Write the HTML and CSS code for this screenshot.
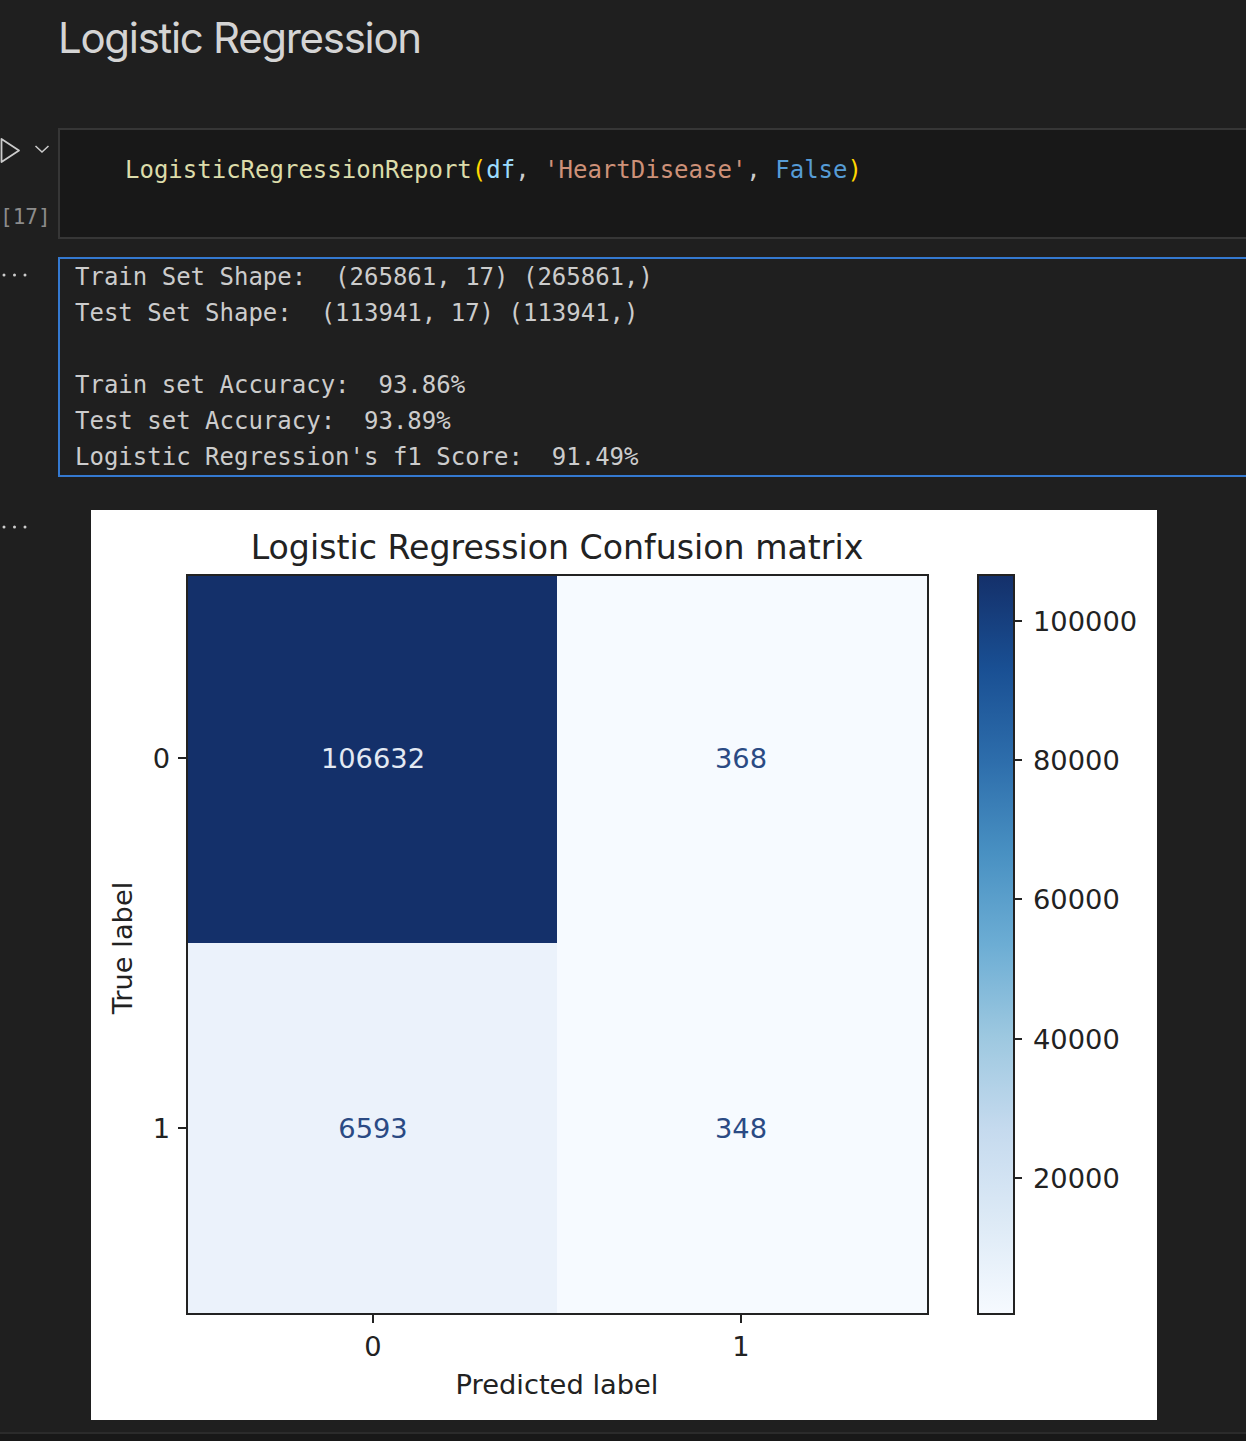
FILE: index.html
```html
<!DOCTYPE html>
<html lang="en">
<head>
<meta charset="utf-8">
<title>Logistic Regression</title>
<link rel="stylesheet" href="styles.css">
</head>
<body>
<div class="page">
  <h1 class="md-title">Logistic Regression</h1>

  <div class="cell code-cell">
    <div class="gutter code-gutter">
      <div class="run-controls">
        <svg class="run-icon" width="22" height="28" viewBox="0 0 22 28"><path d="M1.5 2 L19 13.5 L1.5 25 Z" fill="none" stroke="#cccccc" stroke-width="1.8" stroke-linejoin="round"/></svg>
        <svg class="chevron" width="16" height="10" viewBox="0 0 16 10"><path d="M1.5 2 L8 8 L14.5 2" fill="none" stroke="#cccccc" stroke-width="1.5"/></svg>
      </div>
      <div class="exec-count">[17]</div>
    </div>
    <div class="editor"><pre class="code"><span class="fn">LogisticRegressionReport</span><span class="br">(</span><span class="var">df</span><span class="pn">, </span><span class="str">'HeartDisease'</span><span class="pn">, </span><span class="kw">False</span><span class="br">)</span></pre></div>
  </div>

  <div class="cell output-cell">
    <div class="gutter out-gutter">
      <svg class="dots" width="30" height="6" viewBox="0 0 30 6"><circle cx="4" cy="3" r="1.5" fill="#cccccc"/><circle cx="14.5" cy="3" r="1.5" fill="#cccccc"/><circle cx="25" cy="3" r="1.5" fill="#cccccc"/></svg>
    </div>
    <pre class="output">Train Set Shape:  (265861, 17) (265861,)
Test Set Shape:  (113941, 17) (113941,)

Train set Accuracy:  93.86%
Test set Accuracy:  93.89%
Logistic Regression's f1 Score:  91.49%</pre>
  </div>

  <div class="cell plot-cell">
    <div class="gutter out-gutter plot-gutter">
      <svg class="dots" width="30" height="6" viewBox="0 0 30 6"><circle cx="4" cy="3" r="1.5" fill="#cccccc"/><circle cx="14.5" cy="3" r="1.5" fill="#cccccc"/><circle cx="25" cy="3" r="1.5" fill="#cccccc"/></svg>
    </div>
    <div class="figure">
      <svg class="plot" width="1066" height="910" viewBox="0 0 1066 910">
        <defs>
          <linearGradient id="blues" x1="0" y1="0" x2="0" y2="1">
            <stop offset="0" stop-color="#14306a"/>
            <stop offset="0.125" stop-color="#194f93"/>
            <stop offset="0.25" stop-color="#2d6dab"/>
            <stop offset="0.375" stop-color="#4890c2"/>
            <stop offset="0.5" stop-color="#6cadd4"/>
            <stop offset="0.625" stop-color="#9dc8e0"/>
            <stop offset="0.75" stop-color="#c5daee"/>
            <stop offset="0.875" stop-color="#ddeaf6"/>
            <stop offset="1" stop-color="#f6faff"/>
          </linearGradient>
        </defs>
        <text class="title" x="466" y="49" text-anchor="middle">Logistic Regression Confusion matrix</text>

        <rect x="96" y="65" width="370" height="368" fill="#14306a"/>
        <rect x="466" y="65" width="371" height="368" fill="#f6faff"/>
        <rect x="96" y="433" width="370" height="371" fill="#ebf2fb"/>
        <rect x="466" y="433" width="371" height="371" fill="#f6faff"/>
        <rect x="96" y="65" width="741" height="739" fill="none" stroke="#222" stroke-width="2"/>

        <text class="val light" x="282" y="258" text-anchor="middle">106632</text>
        <text class="val" x="650" y="258" text-anchor="middle">368</text>
        <text class="val" x="282" y="628" text-anchor="middle">6593</text>
        <text class="val" x="650" y="628" text-anchor="middle">348</text>

        <g stroke="#222" stroke-width="2">
          <line x1="87" y1="248" x2="96" y2="248"/>
          <line x1="87" y1="618" x2="96" y2="618"/>
          <line x1="282" y1="804" x2="282" y2="813"/>
          <line x1="650" y1="804" x2="650" y2="813"/>
        </g>
        <text class="tick" x="79" y="258" text-anchor="end">0</text>
        <text class="tick" x="79" y="628" text-anchor="end">1</text>
        <text class="tick" x="282" y="846" text-anchor="middle">0</text>
        <text class="tick" x="650" y="846" text-anchor="middle">1</text>

        <text class="tick" x="466" y="884" text-anchor="middle">Predicted label</text>
        <text class="tick" transform="translate(41 438) rotate(-90)" text-anchor="middle">True label</text>

        <rect x="887" y="65" width="36" height="739" fill="url(#blues)" stroke="#222" stroke-width="2"/>
        <g stroke="#222" stroke-width="2">
          <line x1="923" y1="111" x2="931" y2="111"/>
          <line x1="923" y1="250" x2="931" y2="250"/>
          <line x1="923" y1="389" x2="931" y2="389"/>
          <line x1="923" y1="529" x2="931" y2="529"/>
          <line x1="923" y1="668" x2="931" y2="668"/>
        </g>
        <text class="tick" x="942" y="121">100000</text>
        <text class="tick" x="942" y="260">80000</text>
        <text class="tick" x="942" y="399">60000</text>
        <text class="tick" x="942" y="539">40000</text>
        <text class="tick" x="942" y="678">20000</text>
      </svg>
    </div>
  </div>

  <div class="footer"></div>
</div>
</body>
</html>
```

FILE: styles.css
```css
html, body {
  margin: 0;
  padding: 0;
  background: #1f1f1f;
  overflow: hidden;
}

.page {
  width: 1246px;
  height: 1441px;
  overflow: hidden;
}

.md-title {
  margin: 0;
  padding: 12px 0 0 58px;
  height: 52px;
  font-family: Inter, "Open Sans", sans-serif;
  font-weight: 400;
  font-size: 42px;
  line-height: 52px;
  letter-spacing: -1.3px;
  color: #d4d4d4;
}

.cell {
  display: flex;
}

.gutter {
  width: 58px;
  flex: none;
}

.code-cell {
  margin-top: 64px;
  height: 111px;
}

.code-gutter {
  display: flex;
  flex-direction: column;
  justify-content: space-between;
}

.run-controls {
  display: flex;
  align-items: center;
  gap: 12px;
  padding-top: 9px;
}

.run-icon {
  display: block;
}

.chevron {
  display: block;
  margin-top: -4px;
}

.exec-count {
  font-family: "DejaVu Sans Mono", monospace;
  font-size: 21px;
  line-height: 26px;
  color: #8c8c8c;
  text-align: right;
  padding-right: 15px;
  padding-bottom: 9px;
  white-space: nowrap;
}

.editor {
  flex: 1;
  margin-right: -6px;
  background: #181818;
  border: 2px solid #363636;
  box-sizing: border-box;
  padding: 22px 0 0 65px;
}

.code {
  margin: 0;
  font-family: "DejaVu Sans Mono", monospace;
  font-size: 24px;
  line-height: 36px;
  color: #cccccc;
}

.fn { color: #dcdcaa; }
.br { color: #ffd700; }
.var { color: #9cdcfe; }
.pn { color: #cccccc; }
.str { color: #ce9178; }
.kw { color: #569cd6; }

.output-cell {
  margin-top: 18px;
}

.out-gutter {
  padding-top: 15px;
}

.dots {
  display: block;
}

.output {
  flex: 1;
  margin: 0 -6px 0 0;
  border: 2px solid #3479d0;
  padding: 0 0 0 15px;
  font-family: "DejaVu Sans Mono", monospace;
  font-size: 24px;
  line-height: 36px;
  color: #cccccc;
}

.plot-cell {
  margin-top: 33px;
}

.plot-gutter {
  padding-top: 14px;
}

.figure {
  margin-left: 33px;
  width: 1066px;
  height: 910px;
  background: #ffffff;
}

.plot {
  display: block;
}

.plot text {
  font-family: "DejaVu Sans", sans-serif;
  fill: #222222;
}

.plot .title {
  font-size: 33.2px;
}

.plot .tick {
  font-size: 27.3px;
}

.plot .val {
  font-size: 27.3px;
  fill: #2a4a84;
}

.plot .val.light {
  fill: #e3e9f2;
}

.footer {
  margin-top: 12px;
  height: 9px;
  border-top: 2px solid #2b2b2b;
  background: #181818;
}
```
